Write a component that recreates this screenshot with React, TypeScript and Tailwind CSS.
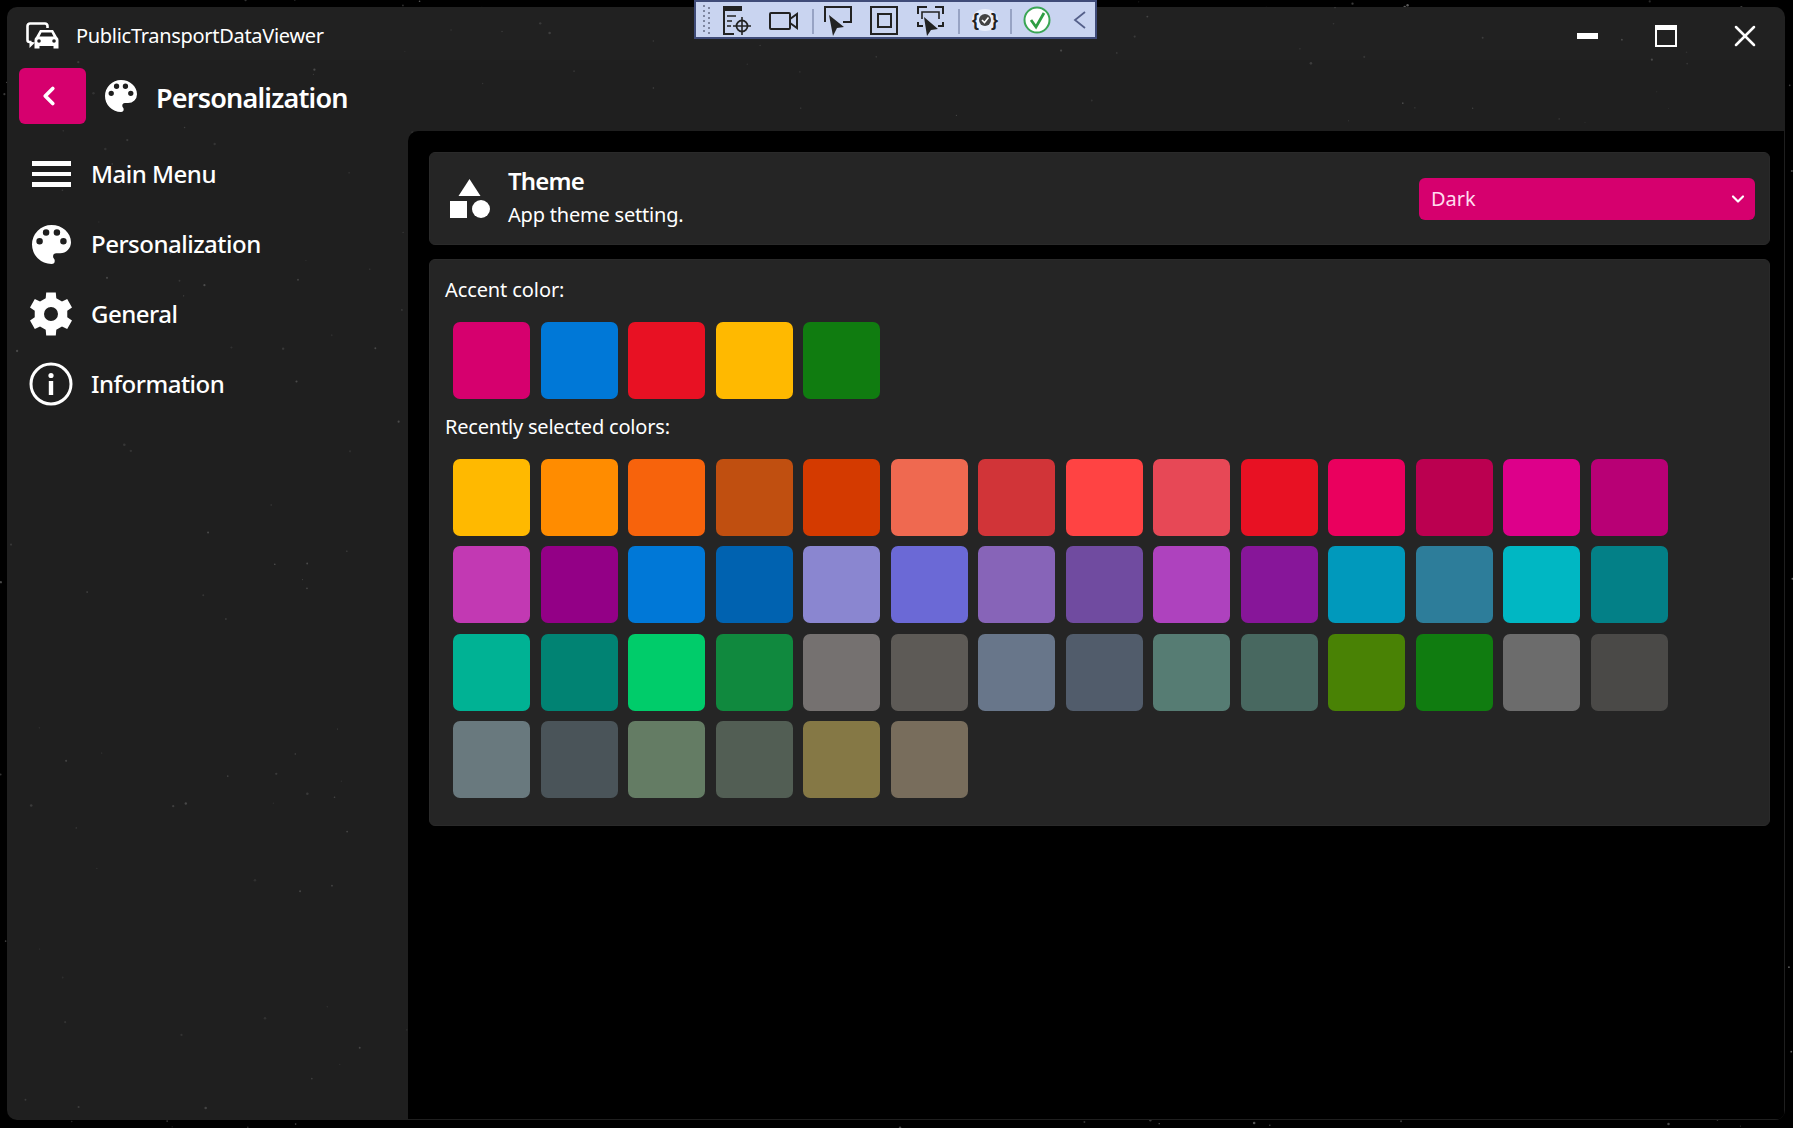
import { ChevronDown, ChevronLeft, X } from "lucide-react";

const recentColors = [
  "#FFB900", "#FF8C00", "#F7630C", "#C04F10", "#D43A00", "#EF6950", "#D13438", "#FF4343", "#E74856", "#E81123", "#EA005E", "#BB0050", "#DD008A", "#B80075",
  "#C239B3", "#930086", "#0078D7", "#0062B0", "#8A86D0", "#6B69D6", "#8764B8", "#704BA0", "#AE42BE", "#871699", "#0099BC", "#2D7D9A", "#00B7C3", "#038087",
  "#00B294", "#018373", "#00CC6A", "#10893E", "#757170", "#5D5A56", "#68768A", "#515C6B", "#567C73", "#486860", "#498205", "#107C10", "#6C6C6C", "#4A4947",
  "#69797E", "#4A5459", "#647C64", "#525E54", "#857845", "#786D5C",
];
const accentColors = ["#D6006E", "#0078D7", "#E81123", "#FFB900", "#107C10"];

// little seeded generator so the star specks stay in the same place
function makeSpecks(count: number, seed: number) {
  let s = seed;
  const next = () => {
    s = (s * 16807) % 2147483647;
    return s / 2147483647;
  };
  return Array.from({ length: count }, () => ({
    x: next() * 1793,
    y: next() * 1128,
    r: 0.5 + next() * 0.8,
    o: 0.06 + next() * 0.14,
  }));
}
const windowSpecks = makeSpecks(420, 4711);
const outerSpecks = makeSpecks(1500, 987);

function gearPath() {
  const teeth = 6;
  const pts: string[] = [];
  for (let i = 0; i < teeth; i++) {
    const a = (i * 2 * Math.PI) / teeth - Math.PI / 2;
    const step = Math.PI / teeth;
    const corners = [
      [a - step * 0.42, 22],
      [a + step * 0.42, 22],
      [a + step * 0.62, 16.6],
      [a + step * 1.38, 16.6],
    ];
    corners.forEach(([ang, r]) => pts.push(`${(24 + r * Math.cos(ang)).toFixed(2)} ${(24 + r * Math.sin(ang)).toFixed(2)}`));
  }
  return `M${pts.join("L")}Z M24 17a7 7 0 1 0 0 14a7 7 0 1 0 0-14Z`;
}

function Palette({ className }: { className: string }) {
  return (
    <svg viewBox="3 3 18 18" className={className} fill="#fff">
      <path d="M17.5,12A1.5,1.5 0 0,1 16,10.5A1.5,1.5 0 0,1 17.5,9A1.5,1.5 0 0,1 19,10.5A1.5,1.5 0 0,1 17.5,12M14.5,8A1.5,1.5 0 0,1 13,6.5A1.5,1.5 0 0,1 14.5,5A1.5,1.5 0 0,1 16,6.5A1.5,1.5 0 0,1 14.5,8M9.5,8A1.5,1.5 0 0,1 8,6.5A1.5,1.5 0 0,1 9.5,5A1.5,1.5 0 0,1 11,6.5A1.5,1.5 0 0,1 9.5,8M6.5,12A1.5,1.5 0 0,1 5,10.5A1.5,1.5 0 0,1 6.5,9A1.5,1.5 0 0,1 8,10.5A1.5,1.5 0 0,1 6.5,12M12,3A9,9 0 0,0 3,12A9,9 0 0,0 12,21A1.5,1.5 0 0,0 13.5,19.5C13.5,19.11 13.35,18.76 13.11,18.5C12.88,18.23 12.73,17.88 12.73,17.5A1.5,1.5 0 0,1 14.23,16H16A5,5 0 0,0 21,11C21,6.58 16.97,3 12,3Z" fillRule="evenodd" />
    </svg>
  );
}

function AppIcon() {
  return (
    <svg viewBox="0 0 33 27" className="w-[33px] h-[27px] shrink-0" fill="none">
      <path d="M5.5 20H3.5A2 2 0 0 1 1.5 18V4A2.5 2.5 0 0 1 4 1.5H19A2.5 2.5 0 0 1 21.5 4V6" stroke="#fff" strokeWidth="2.6" />
      <path d="M3.5 19.5V26L9 20.5Z" fill="#fff" />
      <path d="M14 8H27L31 15Q32.5 16 32.5 18V26.5H27.5V24H13.5V26.5H8.5V18Q8.5 16 10 15Z" fill="#fff" />
      <path d="M15.5 10.5H25.5L27.5 14.5H13.5Z" fill="#1f1f1f" />
      <circle cx="13" cy="19" r="1.8" fill="#1f1f1f" />
      <circle cx="28" cy="19" r="1.8" fill="#1f1f1f" />
    </svg>
  );
}

function DebugToolbar() {
  return (
    <div className="absolute left-[694px] top-0 w-[403px] h-[39px] bg-[#c9d4f0] border-2 border-[#3f4b78] flex items-center z-20">
      <svg viewBox="0 0 399 35" className="w-[399px] h-[35px]" fill="none" stroke="#222">
        {/* grip */}
        <g stroke="none" fill="#7d859f">
          {[3, 8, 13, 18, 23, 28].map((y) => (
            <g key={y}>
              <rect x="7" y={y} width="2" height="2" />
              <rect x="12" y={y + 2} width="2" height="2" />
            </g>
          ))}
        </g>
        {/* live visual tree */}
        <path d="M28 32V5" strokeWidth="2" />
        <path d="M27 32H38" strokeWidth="2" />
        <rect x="27" y="4" width="19" height="5" fill="#222" stroke="none" />
        <path d="M31 14H40M31 19H36M31 24H35" strokeWidth="1.6" />
        <circle cx="46" cy="24" r="5.5" strokeWidth="1.8" />
        <path d="M46 15V33M37 24H55" strokeWidth="1.6" />
        {/* record */}
        <rect x="74" y="11" width="20" height="16" rx="1" strokeWidth="2" />
        <path d="M94 17L101 12V26L94 21" strokeWidth="2" />
        <path d="M117 7V32" stroke="#97a3c4" strokeWidth="2" />
        {/* select element */}
        <path d="M129 20V5H155V20H147" strokeWidth="2" />
        <path d="M133 13L148 25L141 26L137 34Z" fill="#222" stroke="none" />
        {/* layout adorners */}
        <rect x="175" y="5" width="26" height="27" strokeWidth="2" />
        <rect x="182" y="12" width="13" height="13" strokeWidth="2" />
        {/* track focus */}
        <path d="M222 12V5H231M239 5H247V12M222 20V24H227M247 20V24H242" strokeWidth="2" />
        <path d="M226 17V10H243V17" strokeWidth="1.6" />
        <path d="M228 15L242 27L235 28L231 34Z" fill="#222" stroke="none" />
        <path d="M263 7V32" stroke="#97a3c4" strokeWidth="2" />
        {/* binding failures */}
        <ellipse cx="289" cy="18" rx="13" ry="11" fill="#e9eefb" stroke="none" />
        <text x="276" y="24" fontSize="18" fontFamily="Liberation Sans" fill="#222" stroke="none" fontWeight="700">{"{"}</text>
        <text x="295" y="24" fontSize="18" fontFamily="Liberation Sans" fill="#222" stroke="none" fontWeight="700">{"}"}</text>
        <circle cx="289" cy="18" r="6" fill="#444" stroke="none" />
        <path d="M286 18L288.5 20.5L292.5 15.5" stroke="#fff" strokeWidth="1.6" />
        <path d="M315 7V32" stroke="#97a3c4" strokeWidth="2" />
        {/* hot reload ok */}
        <circle cx="341" cy="18" r="12.5" fill="#fff" stroke="#3aa655" strokeWidth="2" />
        <path d="M335 18L340 25L348 11" stroke="#2f9e44" strokeWidth="2.8" />
        <path d="M389 10L379 18L389 26" stroke="#55608a" strokeWidth="1.8" />
      </svg>
    </div>
  );
}

function Swatch({ color }: { color: string }) {
  return <div className="w-[77px] h-[77px] rounded-[7px]" style={{ backgroundColor: color }} />;
}

function NavItem({ icon, label }: { icon: React.ReactNode; label: string }) {
  return (
    <div className="h-[70px] flex items-center pl-[22px]">
      <div className="w-[44px] h-[44px] flex items-center justify-center shrink-0">{icon}</div>
      <span className="ml-[18px] -mt-px text-[24px] font-medium tracking-[-0.5px] text-white">{label}</span>
    </div>
  );
}

export default function App() {
  return (
    <div className="relative w-[1793px] h-[1128px] overflow-hidden bg-black p-[7px] pr-[8px] pb-[8px] font-['Noto_Sans',sans-serif]">
      <svg className="absolute inset-0 w-full h-full pointer-events-none" viewBox="0 0 1793 1128">
        {outerSpecks.map((p, i) => (
          <circle key={i} cx={p.x} cy={p.y} r={p.r} fill="#fff" opacity={p.o * 2} />
        ))}
      </svg>

      <div className="relative w-full h-full rounded-[10px] overflow-hidden bg-[#1f1f1f] flex flex-col">
        <svg className="absolute left-[-7px] top-[-7px] w-[1793px] h-[1128px] pointer-events-none" viewBox="0 0 1793 1128">
          {windowSpecks.map((p, i) => (
            <circle key={i} cx={p.x} cy={p.y} r={p.r} fill="#fff" opacity={p.o} />
          ))}
        </svg>

        {/* title bar */}
        <div className="relative h-[53px] bg-white/[0.01] flex items-center shrink-0 pl-[19px] pt-[4px]">
          <AppIcon />
          <span className="ml-[17px] mt-[1px] text-[20px] text-white tracking-[-0.3px]">PublicTransportDataViewer</span>
          <div className="ml-auto flex items-center">
            <div className="w-[21px] h-[6px] bg-white" />
            <div className="ml-[57px] w-[22px] h-[22px] border-2 border-t-[5px] border-white" />
            <X size={36} strokeWidth={1.7} className="ml-[50px] mr-[22px] text-white" />
          </div>
        </div>

        {/* page header */}
        <div className="relative h-[71px] shrink-0 pl-[12px] pt-[8px] flex items-start">
          <div className="w-[67px] h-[56px] rounded-[6px] bg-[#D6006E] flex items-center justify-center">
            <ChevronLeft size={30} strokeWidth={3} className="text-white -ml-[8px] -mt-[1px]" />
          </div>
          <Palette className="ml-[19px] mt-[12px] w-[32px] h-[32px]" />
          <span className="ml-[19px] mt-[9px] text-[27px] leading-[42px] font-semibold tracking-[-0.8px] text-white">Personalization</span>
        </div>

        <div className="relative flex flex-1 min-h-0 pr-px pb-px">
          {/* sidebar */}
          <nav className="w-[401px] shrink-0 pt-[8px]">
            <NavItem
              label="Main Menu"
              icon={
                <div className="w-[39px] flex flex-col gap-[6px]">
                  <div className="h-[4.5px] bg-white" />
                  <div className="h-[4.5px] bg-white" />
                  <div className="h-[4.5px] bg-white" />
                </div>
              }
            />
            <NavItem label="Personalization" icon={<Palette className="w-[39px] h-[39px]" />} />
            <NavItem
              label="General"
              icon={
                <svg viewBox="0 0 48 48" className="w-[48px] h-[48px] shrink-0">
                  <path d={gearPath()} fill="#fff" fillRule="evenodd" />
                </svg>
              }
            />
            <NavItem
              label="Information"
              icon={
                <svg viewBox="0 0 44 44" className="w-[44px] h-[44px]" fill="#fff">
                  <circle cx="22" cy="22" r="20" fill="none" stroke="#fff" strokeWidth="3" />
                  <circle cx="22" cy="13.5" r="2.6" />
                  <rect x="19.8" y="19" width="4.4" height="14" />
                </svg>
              }
            />
          </nav>

          {/* content */}
          <main className="flex-1 bg-black rounded-tl-[10px] pt-[21px] pl-[21px] pr-[14px]">
            <div className="h-[93px] rounded-[6px] bg-[#252525] border border-[#2a2a2a] flex items-center pl-[20px] pr-[14px]">
              <svg viewBox="0 0 40 40" className="w-[40px] h-[40px] shrink-0" fill="#fff">
                <path d="M19.5 0L30.5 17H8.5Z" />
                <rect x="0" y="22" width="17" height="17" />
                <circle cx="31" cy="30" r="9" />
              </svg>
              <div className="ml-[18px] -mt-[2px]">
                <div className="text-[24px] leading-[32px] font-semibold tracking-[-0.8px] text-white">Theme</div>
                <div className="text-[20px] leading-[30px] mt-[3px] text-white tracking-[-0.2px]">App theme setting.</div>
              </div>
              <div className="ml-auto w-[336px] h-[42px] rounded-[6px] bg-[#D6006E] flex items-center justify-between pl-[12px] pr-[7px]">
                <span className="text-[20px] text-[#ffdcee]">Dark</span>
                <ChevronDown size={20} strokeWidth={2.6} className="text-white" />
              </div>
            </div>

            <div className="mt-[14px] h-[567px] rounded-[6px] bg-[#252525] border border-[#2a2a2a] pl-[15px] pt-[16px]">
              <div className="text-[20px] leading-[28px] text-white tracking-[-0.1px]">Accent color:</div>
              <div className="mt-[18px] ml-[8px] grid grid-cols-[repeat(14,77px)] gap-[10.5px]">
                {accentColors.map((c) => (
                  <Swatch key={c} color={c} />
                ))}
              </div>
              <div className="mt-[14px] text-[20px] leading-[28px] text-white tracking-[-0.2px]">Recently selected colors:</div>
              <div className="mt-[18px] ml-[8px] grid grid-cols-[repeat(14,77px)] gap-x-[10.5px] gap-y-[10.33px]">
                {recentColors.map((c, i) => (
                  <Swatch key={i} color={c} />
                ))}
              </div>
            </div>
          </main>
        </div>
      </div>

      <DebugToolbar />
    </div>
  );
}
